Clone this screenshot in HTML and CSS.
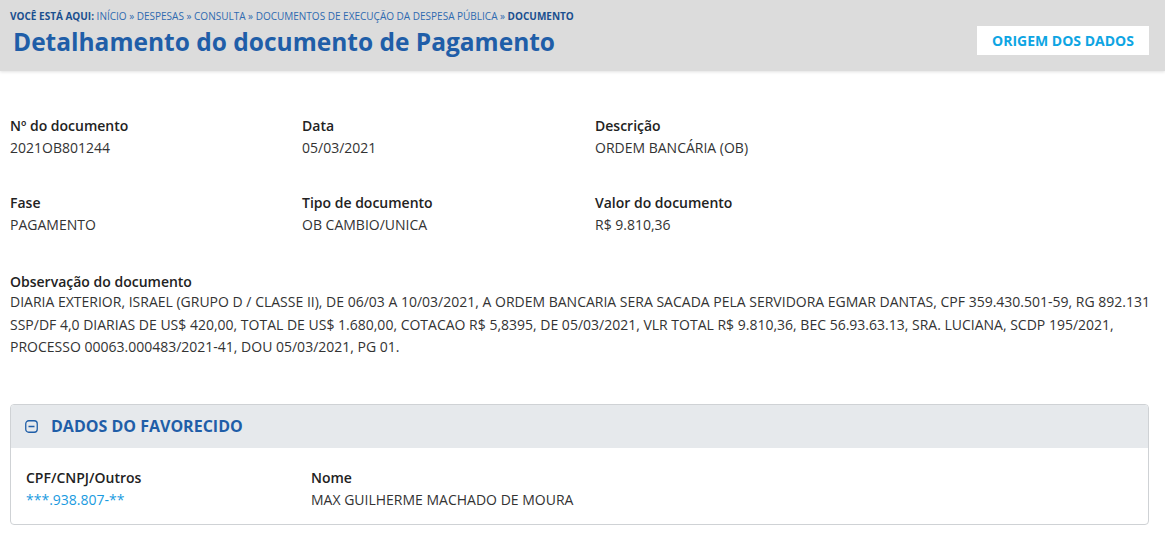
FILE: index.html
```html
<!DOCTYPE html>
<html lang="pt-BR">
<head>
<meta charset="utf-8">
<title>Detalhamento do documento de Pagamento</title>
<link rel="stylesheet" href="styles.css">
</head>
<body>
<header class="page-header">
  <div class="header-text">
    <nav class="breadcrumb"><strong>VOCÊ ESTÁ AQUI:</strong> INÍCIO » DESPESAS » CONSULTA » DOCUMENTOS DE EXECUÇÃO DA DESPESA PÚBLICA » <strong>DOCUMENTO</strong></nav>
    <h1 class="title">Detalhamento do documento de Pagamento</h1>
  </div>
  <a class="origin-btn" href="#">ORIGEM DOS DADOS</a>
</header>

<main class="content">
  <section class="info-grid">
    <div class="field"><div class="label">Nº do documento</div><div class="value">2021OB801244</div></div>
    <div class="field"><div class="label">Data</div><div class="value">05/03/2021</div></div>
    <div class="field"><div class="label">Descrição</div><div class="value">ORDEM BANCÁRIA (OB)</div></div>
    <div class="field"><div class="label">Fase</div><div class="value">PAGAMENTO</div></div>
    <div class="field"><div class="label">Tipo de documento</div><div class="value">OB CAMBIO/UNICA</div></div>
    <div class="field"><div class="label">Valor do documento</div><div class="value">R$ 9.810,36</div></div>
  </section>

  <section class="obs">
    <div class="label">Observação do documento</div>
    <div class="value obs-text">DIARIA EXTERIOR, ISRAEL (GRUPO D / CLASSE II), DE 06/03 A 10/03/2021, A ORDEM BANCARIA SERA SACADA PELA SERVIDORA EGMAR DANTAS, CPF 359.430.501-59, RG 892.131 SSP/DF 4,0 DIARIAS DE US$ 420,00, TOTAL DE US$ 1.680,00, COTACAO R$ 5,8395, DE 05/03/2021, VLR TOTAL R$ 9.810,36, BEC 56.93.63.13, SRA. LUCIANA, SCDP 195/2021, PROCESSO 00063.000483/2021-41, DOU 05/03/2021, PG 01.</div>
  </section>

  <section class="panel">
    <div class="panel-head">
      <svg class="panel-icon" width="13" height="13" viewBox="0 0 13 13" aria-hidden="true">
        <rect x="0.75" y="0.75" width="11.5" height="11.5" rx="3" fill="none" stroke="#1f5ea8" stroke-width="1.3"/>
        <line x1="3.5" y1="6.5" x2="9.5" y2="6.5" stroke="#1f5ea8" stroke-width="1.3"/>
      </svg>
      <h2 class="panel-title">DADOS DO FAVORECIDO</h2>
    </div>
    <div class="panel-body">
      <div class="field fav-doc"><div class="label">CPF/CNPJ/Outros</div><div class="value link">***.938.807-**</div></div>
      <div class="field"><div class="label">Nome</div><div class="value">MAX GUILHERME MACHADO DE MOURA</div></div>
    </div>
  </section>
</main>
</body>
</html>
```

FILE: styles.css
```css
* { box-sizing: border-box; }

html, body {
  margin: 0;
  padding: 0;
  background: #fff;
  font-family: "Open Sans", "Liberation Sans", sans-serif;
  color: #333;
}

.page-header {
  background: #dcdcdc;
  height: 71px;
  display: flex;
  align-items: flex-start;
  justify-content: space-between;
  padding: 0 16px 0 10px;
  box-shadow: 0 1px 3px rgba(0,0,0,0.12);
}

.header-text {
  padding-top: 8px;
}

.breadcrumb {
  font-size: 10px;
  line-height: 16px;
  color: #2f6ab0;
}

.breadcrumb strong {
  color: #1a4f8f;
  font-weight: 700;
}

.title {
  margin: 2px 0 0 3px;
  font-size: 24.5px;
  line-height: 32px;
  font-weight: 700;
  color: #1f5ea8;
}

.origin-btn {
  margin-top: 26px;
  background: #fff;
  height: 29px;
  width: 172px;
  display: flex;
  align-items: center;
  justify-content: center;
  font-size: 14px;
  font-weight: 700;
  color: #0ea5e3;
  text-decoration: none;
}

.content {
  padding: 0 10px;
}

.info-grid {
  display: grid;
  grid-template-columns: 292px 293px 1fr;
  row-gap: 33px;
  padding-top: 45px;
}

.label {
  font-size: 14px;
  line-height: 20px;
  font-weight: 600;
  color: #222;
}

.value {
  font-size: 14px;
  line-height: 24px;
  color: #333;
}

.obs {
  margin-top: 35px;
}

.obs-text {
  line-height: 22.5px;
  margin-top: -1px;
}

.panel {
  margin-top: 45px;
  width: 1139px;
  border: 1px solid #cfd2d5;
  border-radius: 4px;
  overflow: hidden;
}

.panel-head {
  background: #e6e9ec;
  height: 43px;
  display: flex;
  align-items: center;
  padding-left: 14px;
  gap: 13px;
}

.panel-icon {
  display: block;
}

.panel-title {
  margin: 0;
  font-size: 16px;
  font-weight: 700;
  color: #1f5ea8;
}

.panel-body {
  display: flex;
  padding: 20px 15px 12px;
}

.fav-doc {
  width: 285px;
}

.link {
  color: #1a9be0;
}
```
